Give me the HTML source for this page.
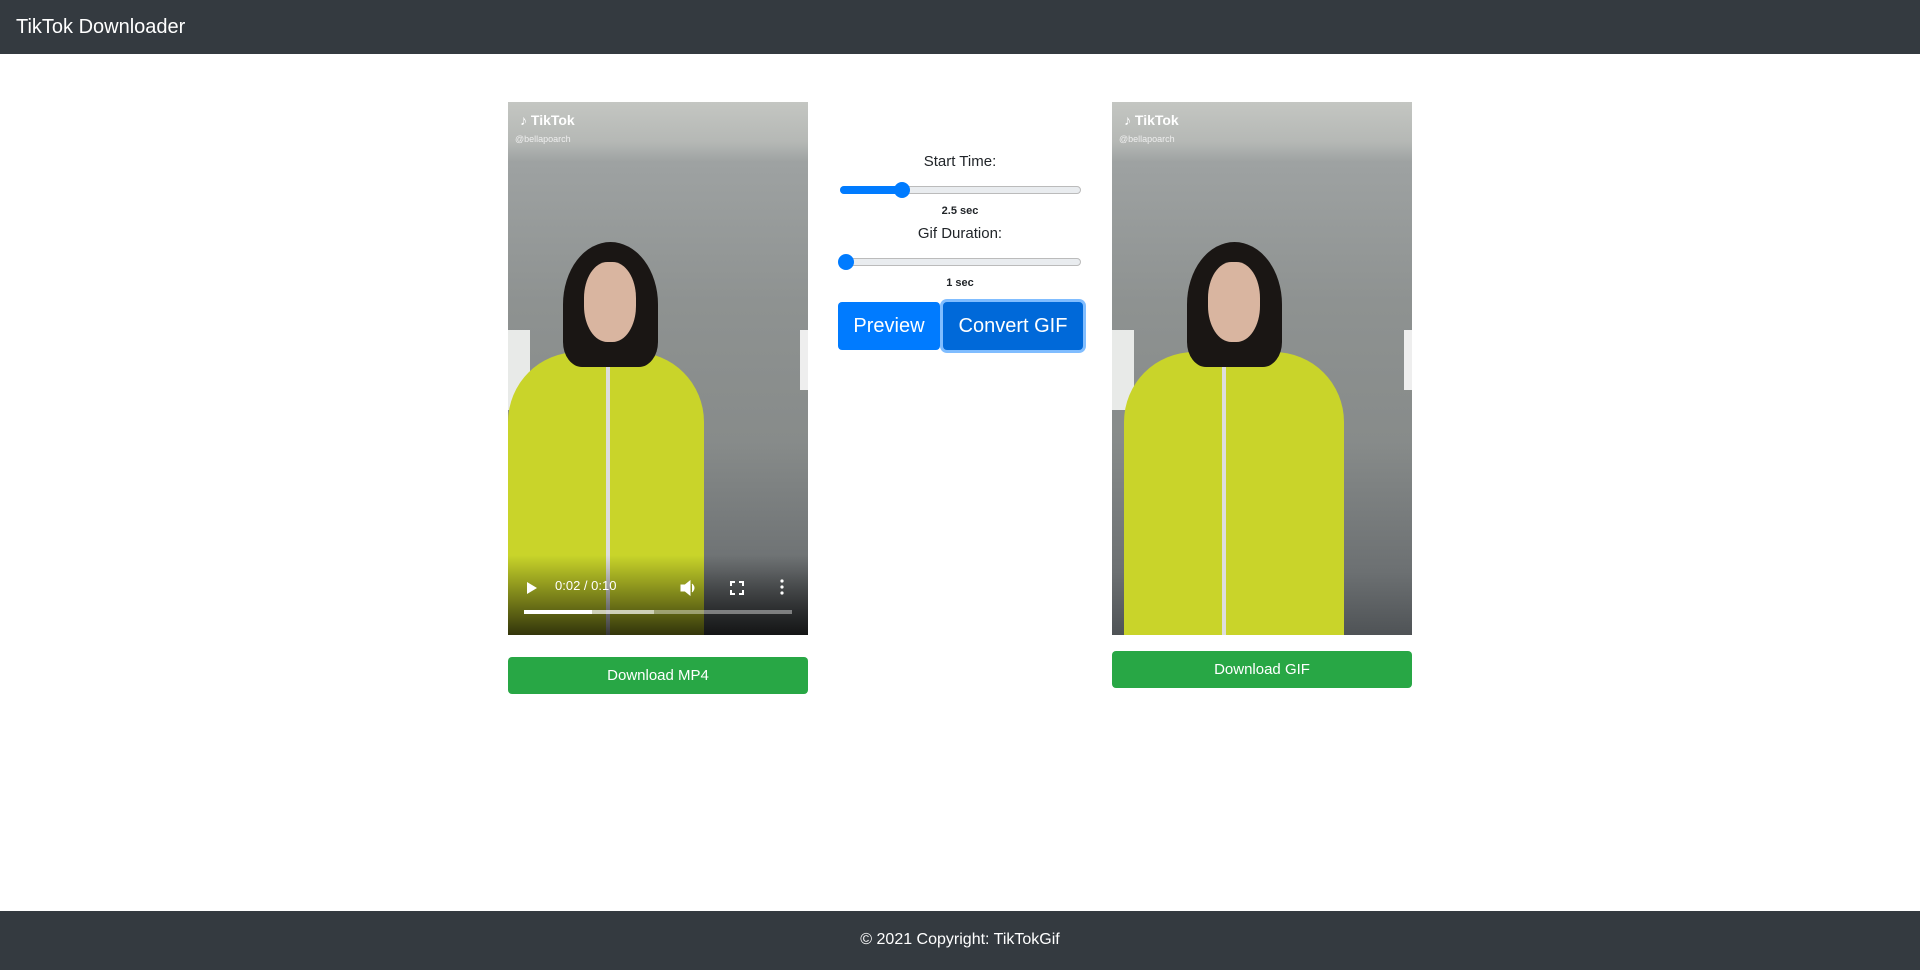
<!DOCTYPE html>
<html><head><style>
*{box-sizing:border-box;margin:0;padding:0}
body{width:1920px;height:970px;background:#fff;font-family:"Liberation Sans","DejaVu Sans",sans-serif;position:relative;overflow:hidden}
.nav{position:absolute;left:0;top:0;width:1920px;height:54px;background:#343a40;color:#fff;font-size:20px;line-height:54px;padding-left:16px}
.foot{position:absolute;left:0;top:911px;width:1920px;height:59px;background:#343a40;color:#fff;font-size:16px;text-align:center;line-height:57px}
.vid{position:absolute;top:102px;width:300px;height:533px;overflow:hidden;background:linear-gradient(#c4c6c2 0,#b5b8b5 40px,#9ea2a2 60px,#8e9291 200px,#878b8a 340px,#6c7072 470px,#4f5356 533px)}
.vid .tt{position:absolute;left:12px;top:10px;color:#fff;font-weight:bold;font-size:14px}
.vid .at{position:absolute;left:7px;top:32px;color:#eee;font-size:9px}
.win{position:absolute;left:0;top:228px;width:22px;height:80px;background:#e8eae8}
.win2{position:absolute;right:0;top:228px;width:8px;height:60px;background:#eee}
.hair{position:absolute;left:55px;top:140px;width:95px;height:125px;background:#1a1614;border-radius:50% 50% 20% 20%}
.face{position:absolute;left:76px;top:160px;width:52px;height:80px;background:#d9b5a0;border-radius:45%}
.body{position:absolute;left:0;top:250px;width:196px;height:300px;background:#c9d42a;border-radius:70px 70px 0 0}
.body:after{content:"";position:absolute;left:98px;top:0;width:4px;height:300px;background:#ddd}
.ctrl{position:absolute;left:0;bottom:0;width:300px;height:80px;background:linear-gradient(transparent,rgba(0,0,0,.75))}
.bar{position:absolute;left:16px;top:508px;width:268px;height:4px;background:rgba(255,255,255,.4)}
.bar i{position:absolute;left:0;top:0;height:4px;width:130px;background:rgba(255,255,255,.5)}
.bar b{position:absolute;left:0;top:0;height:4px;width:68px;background:#fff}
.time{position:absolute;left:47px;top:476px;color:#fff;font-size:13px}
.btn{position:absolute;height:37px;background:#28a745;color:#fff;border-radius:4px;text-align:center;line-height:37px;font-size:15px}
.lbl{position:absolute;left:838px;width:244px;text-align:center;font-size:15px;color:#212529}
.val{position:absolute;left:838px;width:244px;text-align:center;font-size:11px;font-weight:bold;color:#212529}
.track{position:absolute;left:840px;width:241px;height:8px;background:#e9ecef;border:1px solid #bbb;border-radius:4px}
.fill{position:absolute;left:840px;height:8px;background:#007bff;border-radius:4px}
.thumb{position:absolute;width:16px;height:16px;border-radius:50%;background:#007bff}
.b2{position:absolute;top:302px;height:48px;color:#fff;font-size:20px;text-align:center;line-height:48px;border-radius:4px}
</style></head><body>
<div class="nav">TikTok Downloader</div>

<div class="vid" style="left:508px">
<div class="win"></div><div class="win2"></div>
<div class="body"></div><div class="hair"></div><div class="face"></div>
<div class="tt">♪ TikTok</div><div class="at">@bellapoarch</div>
<div class="ctrl"></div>
<svg style="position:absolute;left:18px;top:479px" width="12" height="14"><path d="M1 1L11 7L1 13Z" fill="#fff"/></svg>
<div class="time">0:02 / 0:10</div>
<svg style="position:absolute;left:172px;top:478px" width="18" height="16"><path d="M1 5h4l5-4v14l-5-4H1z M12 4q4 4 0 8" fill="#fff" stroke="#fff"/></svg>
<svg style="position:absolute;left:222px;top:479px" width="14" height="14" fill="none" stroke="#fff" stroke-width="2"><path d="M1 5V1h4M9 1h4v4M13 9v4H9M5 13H1V9"/></svg>
<svg style="position:absolute;left:272px;top:477px" width="4" height="16" fill="#fff"><circle cx="2" cy="2" r="1.6"/><circle cx="2" cy="8" r="1.6"/><circle cx="2" cy="14" r="1.6"/></svg>
<div class="bar"><i></i><b></b></div>
</div>
<div class="btn" style="left:508px;top:657px;width:300px">Download MP4</div>

<div class="vid" style="left:1112px">
<div class="win"></div><div class="win2"></div>
<div class="body" style="left:12px;width:220px"></div><div class="hair" style="left:75px"></div><div class="face" style="left:96px"></div>
<div class="tt">♪ TikTok</div><div class="at">@bellapoarch</div>
</div>
<div class="btn" style="left:1112px;top:651px;width:300px">Download GIF</div>

<div class="lbl" style="top:153px">Start Time:</div>
<div class="track" style="top:186px"></div>
<div class="fill" style="top:186px;width:64px"></div>
<div class="thumb" style="left:894px;top:182px"></div>
<div class="val" style="top:205px">2.5 sec</div>
<div class="lbl" style="top:225px">Gif Duration:</div>
<div class="track" style="top:258px"></div>
<div class="thumb" style="left:838px;top:254px"></div>
<div class="val" style="top:277px">1 sec</div>
<div class="b2" style="left:838px;width:102px;background:#007bff">Preview</div>
<div class="b2" style="left:943px;width:140px;background:#0069d9;box-shadow:0 0 0 3px #80bdff">Convert GIF</div>

<div class="foot">© 2021 Copyright: TikTokGif</div>
</body></html>
